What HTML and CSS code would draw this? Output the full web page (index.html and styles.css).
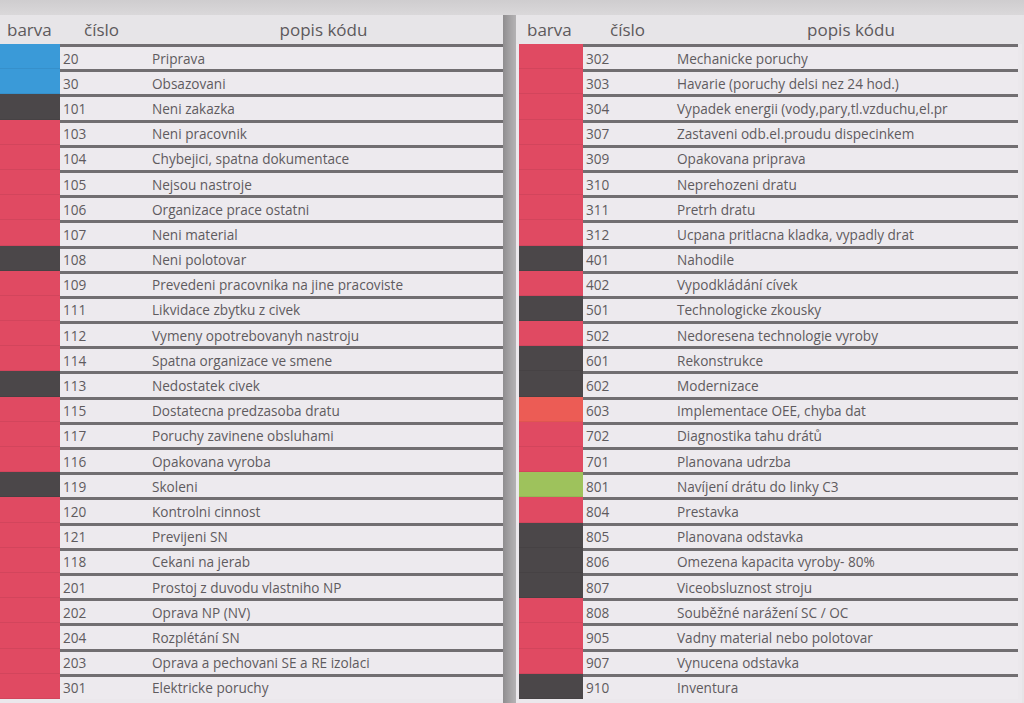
FILE: index.html
```html
<!DOCTYPE html>
<html lang="cs">
<head>
<meta charset="utf-8">
<title>Kódy prostojů</title>
<link rel="stylesheet" href="styles.css">
</head>
<body>
<div class="topband"></div>
<div class="sheet">
  <div class="table left">
    <div class="head"><span class="h-barva">barva</span><span class="h-cislo">číslo</span><span class="h-popis">popis kódu</span></div>
    <div class="row"><span class="sw blue"></span><span class="num">20</span><span class="desc">Priprava</span></div>
    <div class="row"><span class="sw blue"></span><span class="num">30</span><span class="desc">Obsazovani</span></div>
    <div class="row"><span class="sw dark"></span><span class="num">101</span><span class="desc">Neni zakazka</span></div>
    <div class="row"><span class="sw red"></span><span class="num">103</span><span class="desc">Neni pracovnik</span></div>
    <div class="row"><span class="sw red"></span><span class="num">104</span><span class="desc">Chybejici, spatna dokumentace</span></div>
    <div class="row"><span class="sw red"></span><span class="num">105</span><span class="desc">Nejsou nastroje</span></div>
    <div class="row"><span class="sw red"></span><span class="num">106</span><span class="desc">Organizace prace ostatni</span></div>
    <div class="row"><span class="sw red"></span><span class="num">107</span><span class="desc">Neni material</span></div>
    <div class="row"><span class="sw dark"></span><span class="num">108</span><span class="desc">Neni polotovar</span></div>
    <div class="row"><span class="sw red"></span><span class="num">109</span><span class="desc">Prevedeni pracovnika na jine pracoviste</span></div>
    <div class="row"><span class="sw red"></span><span class="num">111</span><span class="desc">Likvidace zbytku z civek</span></div>
    <div class="row"><span class="sw red"></span><span class="num">112</span><span class="desc">Vymeny opotrebovanyh nastroju</span></div>
    <div class="row"><span class="sw red"></span><span class="num">114</span><span class="desc">Spatna organizace ve smene</span></div>
    <div class="row"><span class="sw dark"></span><span class="num">113</span><span class="desc">Nedostatek civek</span></div>
    <div class="row"><span class="sw red"></span><span class="num">115</span><span class="desc">Dostatecna predzasoba dratu</span></div>
    <div class="row"><span class="sw red"></span><span class="num">117</span><span class="desc">Poruchy zavinene obsluhami</span></div>
    <div class="row"><span class="sw red"></span><span class="num">116</span><span class="desc">Opakovana vyroba</span></div>
    <div class="row"><span class="sw dark"></span><span class="num">119</span><span class="desc">Skoleni</span></div>
    <div class="row"><span class="sw red"></span><span class="num">120</span><span class="desc">Kontrolni cinnost</span></div>
    <div class="row"><span class="sw red"></span><span class="num">121</span><span class="desc">Previjeni SN</span></div>
    <div class="row"><span class="sw red"></span><span class="num">118</span><span class="desc">Cekani na jerab</span></div>
    <div class="row"><span class="sw red"></span><span class="num">201</span><span class="desc">Prostoj z duvodu vlastniho NP</span></div>
    <div class="row"><span class="sw red"></span><span class="num">202</span><span class="desc">Oprava NP (NV)</span></div>
    <div class="row"><span class="sw red"></span><span class="num">204</span><span class="desc">Rozplétání SN</span></div>
    <div class="row"><span class="sw red"></span><span class="num">203</span><span class="desc">Oprava a pechovani SE a RE izolaci</span></div>
    <div class="row"><span class="sw red"></span><span class="num">301</span><span class="desc">Elektricke poruchy</span></div>
  </div>
  <div class="divider"></div>
  <div class="table right">
    <div class="head"><span class="h-barva">barva</span><span class="h-cislo">číslo</span><span class="h-popis">popis kódu</span></div>
    <div class="row"><span class="sw red"></span><span class="num">302</span><span class="desc">Mechanicke poruchy</span></div>
    <div class="row"><span class="sw red"></span><span class="num">303</span><span class="desc">Havarie (poruchy delsi nez 24 hod.)</span></div>
    <div class="row"><span class="sw red"></span><span class="num">304</span><span class="desc">Vypadek energii (vody,pary,tl.vzduchu,el.pr</span></div>
    <div class="row"><span class="sw red"></span><span class="num">307</span><span class="desc">Zastaveni odb.el.proudu dispecinkem</span></div>
    <div class="row"><span class="sw red"></span><span class="num">309</span><span class="desc">Opakovana priprava</span></div>
    <div class="row"><span class="sw red"></span><span class="num">310</span><span class="desc">Neprehozeni dratu</span></div>
    <div class="row"><span class="sw red"></span><span class="num">311</span><span class="desc">Pretrh dratu</span></div>
    <div class="row"><span class="sw red"></span><span class="num">312</span><span class="desc">Ucpana pritlacna kladka, vypadly drat</span></div>
    <div class="row"><span class="sw dark"></span><span class="num">401</span><span class="desc">Nahodile</span></div>
    <div class="row"><span class="sw red"></span><span class="num">402</span><span class="desc">Vypodkládání cívek</span></div>
    <div class="row"><span class="sw dark"></span><span class="num">501</span><span class="desc">Technologicke zkousky</span></div>
    <div class="row"><span class="sw red"></span><span class="num">502</span><span class="desc">Nedoresena technologie vyroby</span></div>
    <div class="row"><span class="sw dark"></span><span class="num">601</span><span class="desc">Rekonstrukce</span></div>
    <div class="row"><span class="sw dark"></span><span class="num">602</span><span class="desc">Modernizace</span></div>
    <div class="row"><span class="sw orange"></span><span class="num">603</span><span class="desc">Implementace OEE, chyba dat</span></div>
    <div class="row"><span class="sw red"></span><span class="num">702</span><span class="desc">Diagnostika tahu drátů</span></div>
    <div class="row"><span class="sw red"></span><span class="num">701</span><span class="desc">Planovana udrzba</span></div>
    <div class="row"><span class="sw green"></span><span class="num">801</span><span class="desc">Navíjení drátu do linky C3</span></div>
    <div class="row"><span class="sw red"></span><span class="num">804</span><span class="desc">Prestavka</span></div>
    <div class="row"><span class="sw dark"></span><span class="num">805</span><span class="desc">Planovana odstavka</span></div>
    <div class="row"><span class="sw dark"></span><span class="num">806</span><span class="desc">Omezena kapacita vyroby- 80%</span></div>
    <div class="row"><span class="sw dark"></span><span class="num">807</span><span class="desc">Viceobsluznost stroju</span></div>
    <div class="row"><span class="sw red"></span><span class="num">808</span><span class="desc">Souběžné narážení SC / OC</span></div>
    <div class="row"><span class="sw red"></span><span class="num">905</span><span class="desc">Vadny material nebo polotovar</span></div>
    <div class="row"><span class="sw red"></span><span class="num">907</span><span class="desc">Vynucena odstavka</span></div>
    <div class="row"><span class="sw dark"></span><span class="num">910</span><span class="desc">Inventura</span></div>
  </div>
</div>
</body>
</html>
```

FILE: styles.css
```css
* { box-sizing: border-box; }
html, body { margin: 0; padding: 0; }
body {
  width: 1024px;
  height: 703px;
  overflow: hidden;
  background: #e6e4e7;
  font-family: "Open Sans", Lato, "Liberation Sans", sans-serif;
  color: #5a5659;
}
.topband {
  height: 15px;
  background: linear-gradient(#cfcdcf, #dad8da);
}
.sheet {
  display: flex;
  align-items: stretch;
  height: 688px;
}
.table {
  display: flex;
  flex-direction: column;
  background: #ebe8ec;
}
.table.left { width: 503px; }
.table.right { width: 506px; }
.divider {
  width: 13px;
  background: linear-gradient(90deg, #8f8d8f, #a7a5a7 60%, #b4b2b4);
}
.head {
  height: 29px;
  display: flex;
  align-items: center;
  font-size: 17px;
  color: #5d595c;
  background: #e7e5e8;
}
.h-barva { padding-left: 7px; width: 84px; }
.h-cislo { width: 60px; }
.h-popis { flex: 1; text-align: center; }
.right .h-barva { padding-left: 11px; width: 94px; }
.right .h-cislo { width: 70px; }

.row {
  height: 25.2px;
  display: flex;
  align-items: stretch;
  font-size: 13.6px;
  color: #5f5b5e;
}
.sw {
  width: 60px;
  flex: none;
  border-bottom: 1px solid rgba(0,0,0,0.06);
}
.num, .desc {
  display: flex;
  align-items: center;
  border-top: 3px solid #716e71;
  background: #edeaee;
}
.num { width: 92px; padding-left: 3px; }
.desc { flex: 1; padding-left: 0; }
.right .sw { width: 64px; margin-left: 3px; }
.right .num { width: 94px; padding-left: 3px; }
.right .desc { margin-right: 4px; }

.blue { background: #3a9ad8; }
.dark { background: #4b4749; }
.red { background: #e04a62; }
.orange { background: #ec5c55; }
.green { background: #9ec25c; }
```
